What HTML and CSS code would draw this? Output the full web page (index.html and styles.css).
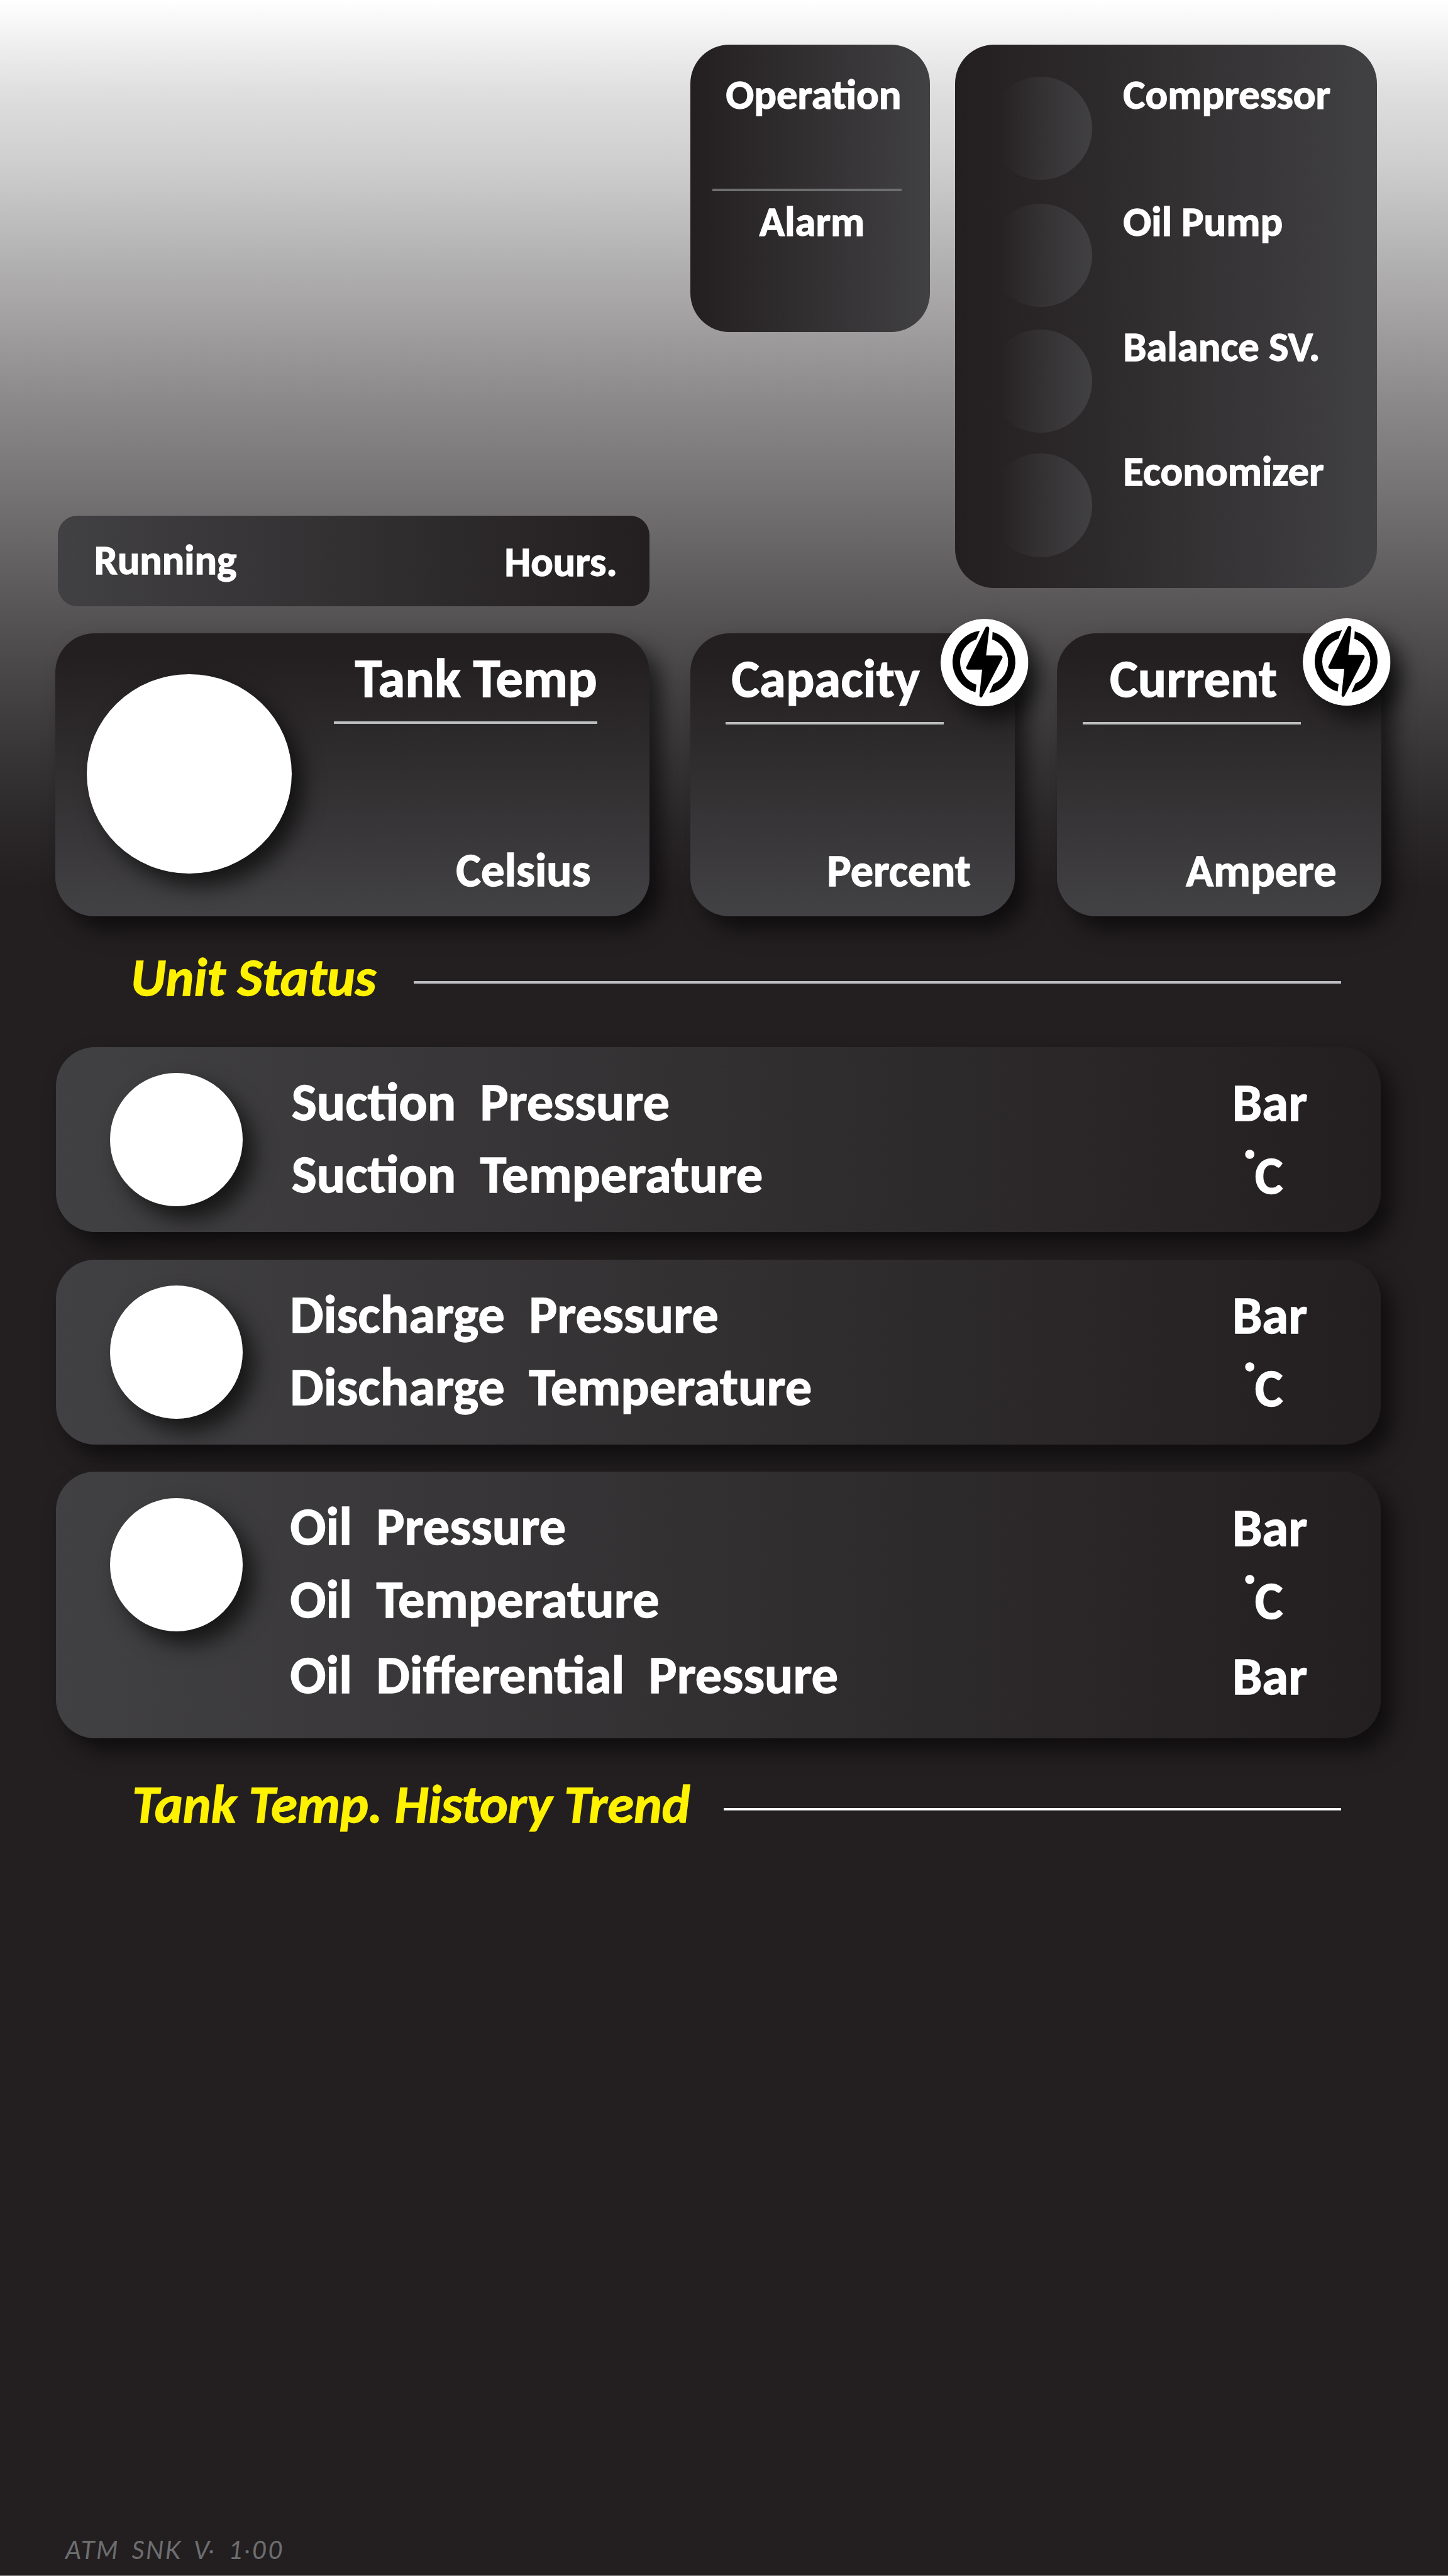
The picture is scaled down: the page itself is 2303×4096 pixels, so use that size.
FILE: index.html
```
<!DOCTYPE html>
<html lang="en">
<head>
<meta charset="utf-8">
<title>Compressor Unit Panel</title>
<link rel="stylesheet" href="styles.css">
</head>
<body>
<svg class="defs" width="0" height="0" aria-hidden="true">
  <symbol id="bolt" viewBox="49 41 418 418">
    <circle cx="258" cy="250" r="209" fill="#fff"/>
    <path d="M236 98A150 150 0 0 0 215 391L220 355A114 114 0 0 1 219 139Z"/>
    <path d="M297 103A150 150 0 0 1 281 395L300 352A114 114 0 0 0 295 139Z"/>
    <path d="M263 83Q266 77 272 78Q281 79 281 89L266 216H337Q346 218 344 227L249 410Q246 417 240 416Q234 415 234 407L247 283H178Q169 280 171 271Z"/>
  </symbol>
</svg>
<main class="page">
  <header class="top">
    <section class="card running">
      <span>Running</span>
      <span class="hours">Hours.</span>
    </section>
    <section class="card state">
      <div class="state-operation">Operation</div>
      <div class="state-rule"></div>
      <div class="state-alarm">Alarm</div>
    </section>
    <ul class="card devices">
      <li><i class="led"></i><span>Compressor</span></li>
      <li><i class="led"></i><span>Oil Pump</span></li>
      <li><i class="led"></i><span>Balance SV.</span></li>
      <li><i class="led"></i><span>Economizer</span></li>
    </ul>
  </header>

  <div class="gauges">
    <section class="card gauge tank">
      <i class="lamp lamp-large"></i>
      <div class="gauge-body">
        <h3>Tank Temp</h3>
        <div class="gauge-rule"></div>
        <p>Celsius</p>
      </div>
    </section>
    <section class="card gauge capacity">
      <div class="gauge-body">
        <h3>Capacity</h3>
        <div class="gauge-rule"></div>
        <p>Percent</p>
      </div>
      <svg class="badge"><use href="#bolt"/></svg>
    </section>
    <section class="card gauge current">
      <div class="gauge-body">
        <h3>Current</h3>
        <div class="gauge-rule"></div>
        <p>Ampere</p>
      </div>
      <svg class="badge"><use href="#bolt"/></svg>
    </section>
  </div>

  <div class="heading heading-status">
    <h2>Unit Status</h2>
    <div class="heading-rule"></div>
  </div>

  <div class="readings">
    <section class="card reading suction">
      <i class="lamp"></i>
      <ul class="names"><li>Suction  Pressure</li><li>Suction  Temperature</li></ul>
      <ul class="units"><li>Bar</li><li class="deg"><span>˙</span>C</li></ul>
    </section>
    <section class="card reading discharge">
      <i class="lamp"></i>
      <ul class="names"><li>Discharge  Pressure</li><li>Discharge  Temperature</li></ul>
      <ul class="units"><li>Bar</li><li class="deg"><span>˙</span>C</li></ul>
    </section>
    <section class="card reading oil">
      <i class="lamp"></i>
      <ul class="names"><li>Oil  Pressure</li><li>Oil  Temperature</li><li>Oil  Differential  Pressure</li></ul>
      <ul class="units"><li>Bar</li><li class="deg"><span>˙</span>C</li><li>Bar</li></ul>
    </section>
  </div>

  <div class="heading heading-trend">
    <h2>Tank Temp. History Trend</h2>
    <div class="heading-rule"></div>
  </div>

  <footer class="version">ATM SNK V<span>.</span> 1<span>.</span>00</footer>
</main>
</body>
</html>
```
FILE: styles.css
```
* { box-sizing: border-box; margin: 0; padding: 0; }

body {
  width: 2303px;
  background: #231f20;
  color: #fff;
  font: 700 84.7px/1 Carlito, Calibri, Lato, sans-serif;
  -webkit-text-stroke: 1.3px currentColor;
}

ul { list-style: none; }
.defs { display: block; }

.page {
  display: flex;
  flex-direction: column;
  width: 2303px;
  height: 4096px;
  overflow: hidden;
  border-bottom: 1px solid #8a8889;
  background: #231f20 linear-gradient(#fff 0, #f0f0f0 65px, #dedede 150px, #cfcfcf 255px, #b8b8b8 380px, #a9a7a8 470px, #999798 560px, #8a8788 650px, #7b7879 750px, #6b6869 850px, #5b5859 950px, #4e4c4d 1030px, #434142 1110px, #373435 1210px, #2b2829 1310px, #231f20 1410px) no-repeat;
}

.card { border-radius: 62px; }

/* Status block above the gauges */
.top {
  display: flex;
  align-items: flex-start;
  height: 964px;
  padding: 71px 0 0 92px;
  font-size: 66.6px;
}

.running {
  display: flex;
  justify-content: space-between;
  align-self: flex-end;
  width: 941px;
  height: 143.6px;
  margin-right: 65.3px;
  padding: 38px 51px 0 57.7px;
  border-radius: 31px;
  background: linear-gradient(to left, #231f20, #414042);
  font-size: 66.1px;
}
.hours { padding-top: 3px; }

.state {
  width: 380.4px;
  height: 456.7px;
  margin-right: 40.6px;
  padding-top: 46.7px;
  background: linear-gradient(to right, #231f20, #414042);
}
.state-operation { padding-left: 56px; }
.state-rule { width: 300.5px; height: 4px; margin: 115.7px 0 15.7px 35.2px; background: #6d6e70; }
.state-alarm { padding-left: 109.5px; }

.devices {
  display: grid;
  grid-template-rows: 202.1px 199.7px 197.5px 180px;
  width: 670.4px;
  height: 864px;
  padding: 46.5px 0 0 53.5px;
  background: linear-gradient(to right, #231f20, #414042);
}
.devices li { display: flex; align-items: flex-start; gap: 49px; }
.led {
  width: 164.5px;
  height: 164.5px;
  margin-top: 4.3px;
  border-radius: 50%;
  background: linear-gradient(to right, #231f2000 12%, #414042);
}

/* Round white indicators */
.lamp {
  flex: none;
  width: 211.2px;
  height: 211.7px;
  border-radius: 50%;
  background: #fff;
  box-shadow: 18px 20px 34px rgba(0, 0, 0, .64);
}
.lamp-large { width: 326px; height: 317px; margin: 64.5px 0 0 49.8px; }

/* Gauges */
.gauges { display: flex; margin-top: 43px; padding-left: 88px; }
.gauge {
  position: relative;
  display: flex;
  width: 516px;
  height: 449.6px;
  background: linear-gradient(#231f20 8%, #414042 96%);
  box-shadow: 18px 20px 34px rgba(0, 0, 0, .6);
}
.gauge h3 { font-size: 84.7px; }
.gauge p { font-size: 72.4px; }
.gauge-rule { height: 3.8px; background: #bcbec0; }

.tank { width: 945px; margin-right: 65.3px; }
.tank .gauge-body { width: 419.6px; margin-left: 67px; padding-top: 27.9px; }
.tank h3 { padding-left: 33.8px; font-size: 87.2px; }
.tank .gauge-rule { margin: 25.3px 0 195.8px; }
.tank p { padding-left: 194.5px; font-size: 74.9px; }

.capacity { margin-right: 66.4px; }
.capacity .gauge-body, .current .gauge-body { padding-top: 29.7px; }
.capacity h3 { padding-left: 65px; }
.capacity .gauge-rule { width: 346.8px; margin: 26.5px 0 196.4px 55.7px; }
.capacity p { padding-left: 217px; }

.current h3 { padding-left: 84.2px; }
.current .gauge-rule { width: 346.8px; margin: 26.5px 0 196.4px 41.3px; }
.current p { padding-left: 205.5px; }

.badge {
  position: absolute;
  top: -23.4px;
  left: 398px;
  width: 139.4px;
  height: 139.4px;
  border-radius: 50%;
  box-shadow: 18px 20px 34px rgba(0, 0, 0, .6);
}
.current .badge { top: -24.2px; left: 391.8px; }

/* Section headings */
.heading { display: flex; justify-content: space-between; padding: 0 170px 0 208.2px; }
.heading h2 { color: #fff200; font-size: 84.9px; font-style: italic; white-space: nowrap; }
.heading-rule { width: 1475.3px; height: 4px; margin-top: 48px; background: #bcbec0; }
.heading-status { margin: 55.6px 0 67.8px; }
.heading-trend { margin-top: 63px; padding-left: 210.3px; }
.heading-trend .heading-rule { width: 981.7px; background: linear-gradient(#fff 65%, #a7a9ac 65%); }

/* Readings */
.readings { display: flex; flex-direction: column; gap: 43.8px; padding-left: 88.6px; }
.reading {
  display: flex;
  width: 2107.6px;
  height: 294px;
  padding: 41.4px 0 0 86.5px;
  background: linear-gradient(to left, #231f20, #414042);
  box-shadow: 18px 20px 34px rgba(0, 0, 0, .58);
}
.reading ul { margin-top: -11.4px; line-height: 115.3px; white-space: pre; }
.names { width: 1498.6px; margin-left: 75px; }
.reading .units { margin-top: -10.2px; }
.suction .names { width: 1496.2px; margin-left: 77.4px; }
.deg { padding-top: 1px; }
.deg span { position: relative; top: -9px; left: 2px; display: inline-block; width: 35.8px; text-align: right; }
.oil { height: 423.6px; }
.oil li:nth-child(3) { padding-top: 5.2px; }

.version {
  margin-top: auto;
  padding: 0 0 16px 104px;
  color: #6d6e70;
  font: italic 400 40px/50px Lato, sans-serif;
  letter-spacing: 2.3px;
  word-spacing: 8px;
  -webkit-text-stroke: 0;
}
.version span { position: relative; top: -9px; }
```
